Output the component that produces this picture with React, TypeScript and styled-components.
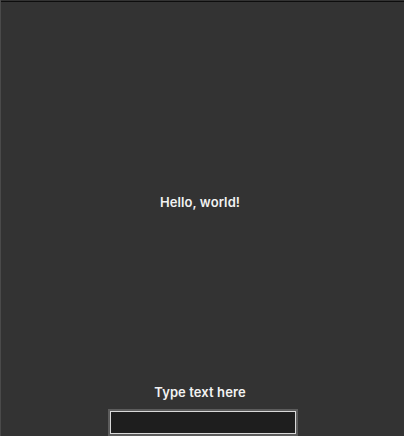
import React, { useState } from 'react';
import styled, { createGlobalStyle } from 'styled-components';

const GlobalStyle = createGlobalStyle`
  html, body {
    margin: 0;
    padding: 0;
    background: #333333;
  }
  body {
    font-family: Inter, "Liberation Sans", Arial, sans-serif;
  }
`;

const Window = styled.div`
  box-sizing: border-box;
  height: 436px;
  padding-top: 1px;
  background: #333333;
  border-left: 1px solid #4a4a4a;
  display: flex;
  flex-direction: column;
`;

const Frame = styled.div`
  flex: 1;
  display: flex;
  flex-direction: column;
  border-top: 1px solid #0d0d0d;
`;

const Main = styled.div`
  flex: 1;
  display: flex;
  align-items: center;
  justify-content: center;
  padding: 26px 5px 0 0;
`;

const Label = styled.span`
  color: #f2f2f2;
  font-size: 13px;
  font-weight: 600;
  line-height: 16px;
  letter-spacing: 0.1px;
`;

const Footer = styled.div`
  display: flex;
  flex-direction: column;
  align-items: center;
  gap: 11px;
  padding: 8px 5px 2px 0;
`;

const TextInput = styled.input`
  box-sizing: border-box;
  width: 186px;
  height: 23px;
  margin: 0 0 0 5px;
  padding: 0 4px;
  background: #1e1e1e;
  border: 1px solid #d8d8d8;
  border-radius: 0;
  box-shadow: 0 0 0 2px #5c5c5c;
  color: #f2f2f2;
  font-family: Inter, "Liberation Sans", Arial, sans-serif;
  font-size: 13px;
  outline: none;
`;

const App: React.FC = () => {
  const [text, setText] = useState('');

  return (
    <>
      <GlobalStyle />
      <Window>
        <Frame>
          <Main>
            <Label>Hello, world!</Label>
          </Main>
          <Footer>
            <Label>Type text here</Label>
            <TextInput value={text} onChange={(e) => setText(e.target.value)} />
          </Footer>
        </Frame>
      </Window>
    </>
  );
};

export default App;
